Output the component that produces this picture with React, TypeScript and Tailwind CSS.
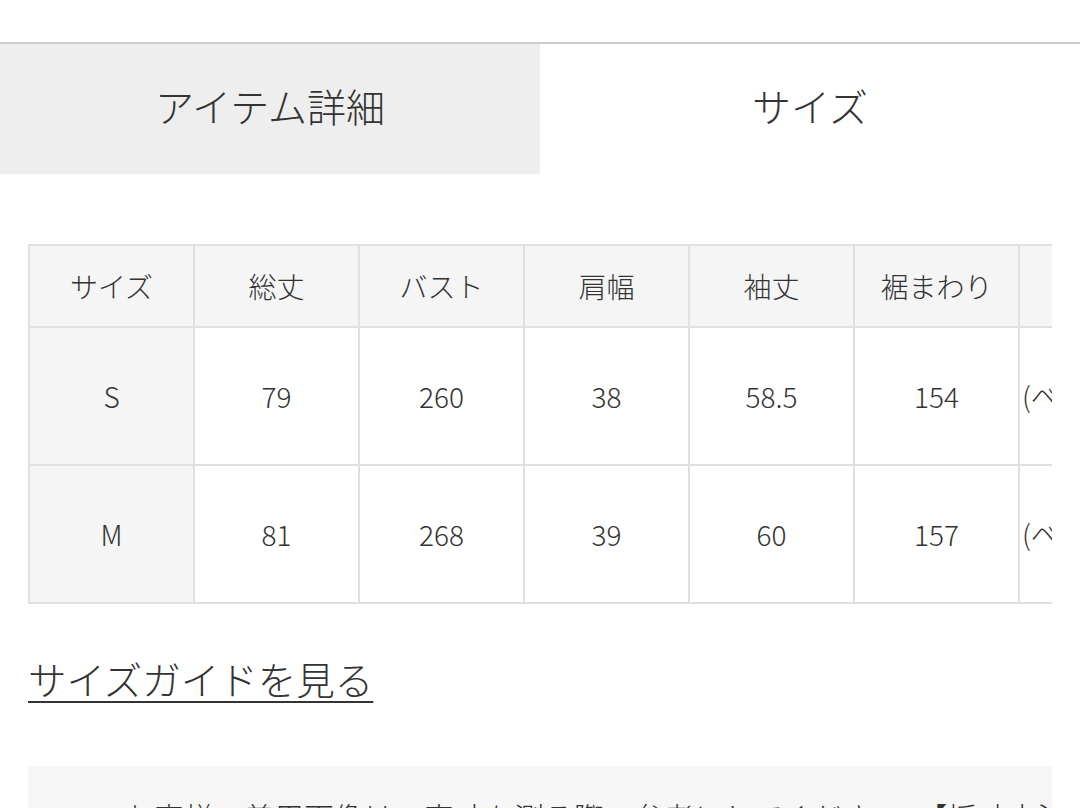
import React from 'react';

const columns = ['サイズ', '総丈', 'バスト', '肩幅', '袖丈', '裾まわり'];

const rows = [
  { size: 'S', values: ['79', '260', '38', '58.5', '154'], note: '(ベルト含む)' },
  { size: 'M', values: ['81', '268', '39', '60', '157'], note: '(ベルト含む)' },
];

const cell = 'border-2 border-[#e0e0e0] w-[165px] min-w-[165px] text-center align-middle font-light';

const App: React.FC = () => {
  return (
    <div
      className="w-[1080px] h-[808px] overflow-hidden bg-white text-[#333333] font-light"
      style={{ fontFamily: '"Noto Sans CJK JP", "Noto Sans", sans-serif' }}
    >
      <div className="h-[42px]" />
      <div className="border-t-2 border-[#cccccc] flex h-[132px]">
        <button className="w-[540px] bg-[#eeeeee] flex items-center justify-center text-[39px] font-light pb-2">
          アイテム詳細
        </button>
        <button className="flex-1 bg-white flex items-center justify-center text-[39px] font-light pb-2">
          サイズ
        </button>
      </div>

      <div className="mt-[70px] mx-[28px] overflow-hidden">
        <table className="border-collapse table-fixed text-[28px] leading-none">
          <thead>
            <tr className="h-[82px] bg-[#f5f5f5]">
              {columns.map((c) => (
                <th key={c} className={cell}>
                  {c}
                </th>
              ))}
              <th className="border-2 border-[#e0e0e0] w-[400px] min-w-[400px] font-light">備考</th>
            </tr>
          </thead>
          <tbody>
            {rows.map((r) => (
              <tr key={r.size} className="h-[138px]">
                <td className={`${cell} bg-[#f5f5f5]`}>{r.size}</td>
                {r.values.map((v, i) => (
                  <td key={i} className={cell}>
                    {v}
                  </td>
                ))}
                <td className="border-2 border-[#e0e0e0] w-[400px] min-w-[400px] text-left pl-[2px] whitespace-nowrap">
                  {r.note}
                </td>
              </tr>
            ))}
          </tbody>
        </table>
      </div>

      <div className="mt-[50px] ml-[28px]">
        <a href="#" className="text-[38.5px] leading-[48px] underline decoration-2 underline-offset-[6px] text-[#333333]">
          サイズガイドを見る
        </a>
      </div>

      <div className="mt-[64px] mx-[28px] bg-[#f6f6f6] pt-[28px] px-[66px] h-[200px] text-[30px] leading-[44px] whitespace-nowrap overflow-hidden">
        ・お客様の着用画像は、実寸を測る際の参考にしてください。【採寸方法】
      </div>
    </div>
  );
};

export default App;
